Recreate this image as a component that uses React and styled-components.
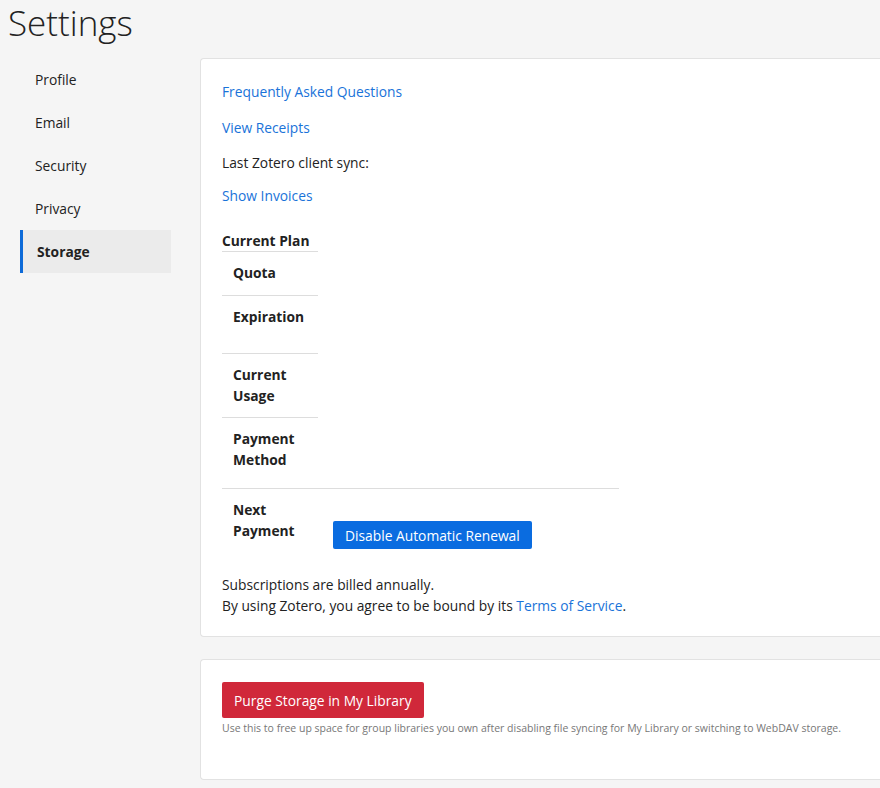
import React from "react";
import styled, { createGlobalStyle } from "styled-components";

const Global = createGlobalStyle`
  html, body { margin: 0; background: #f5f5f5; }
  body { font-family: "Open Sans", "Noto Sans", sans-serif; font-size: 13.8px; color: #222; }
`;

const Page = styled.div`
  padding: 0 0 0 8px;
  width: 872px;
  overflow: hidden;
`;
const Title = styled.h1`
  margin: 0;
  font-weight: 300;
  font-size: 35px;
  line-height: 46px;
  color: #222;
`;
const Body = styled.div`
  display: flex;
  margin-top: 12px;
`;
const Nav = styled.nav`
  width: 151px;
  margin-left: 12px;
  margin-right: 29px;
  display: flex;
  flex-direction: column;
`;
const NavItem = styled.div`
  height: 43px;
  display: flex;
  align-items: center;
  padding-left: ${p => (p.$active ? "14px" : "15px")};
  border-left: ${p => (p.$active ? "3px solid #0d6ad8" : "none")};
  background: ${p => (p.$active ? "#ebebeb" : "transparent")};
  font-weight: ${p => (p.$active ? 700 : 400)};
  color: #222;
`;
const Main = styled.div`
  flex: 1;
  display: flex;
  flex-direction: column;
  gap: 22px;
`;
const Card = styled.section`
  background: #fff;
  border: 1px solid #e2e2e2;
  border-right: none;
  border-radius: 4px 0 0 4px;
  padding: ${p => p.$pad};
`;
const Link = styled.a`
  color: #1a73d9;
  text-decoration: none;
`;
const Line = styled.div`
  line-height: 20px;
  margin-bottom: ${p => p.$mb || 0}px;
`;
const Table = styled.div`
  display: grid;
  grid-template-columns: 96px 301px;
  margin-top: 24px;
  line-height: 21px;
`;
const Head = styled.div`
  grid-column: 1;
  font-weight: 700;
  padding-bottom: 0;
  border-bottom: 1px solid #ddd;
`;
const Label = styled.div`
  grid-column: 1;
  font-weight: 700;
  padding: 10px 11px 0;
  height: ${p => p.$h}px;
  box-sizing: border-box;
  border-top: ${p => (p.$top ? "1px solid #ddd" : "none")};
`;
const Value = styled.div`
  grid-column: 2;
  padding: 32px 0 0 15px;
  border-top: 1px solid #ddd;
`;
const Blue = styled.button`
  background: #0a6ce0;
  color: #fff;
  border: none;
  border-radius: 2px;
  font: inherit;
  padding: 0 12px;
  height: 28px;
`;
const Notes = styled.div`
  margin-top: 22px;
  line-height: 21px;
`;
const Red = styled.button`
  background: #d0283a;
  color: #fff;
  border: none;
  border-radius: 2px;
  font: inherit;
  padding: 0 12px;
  height: 36px;
`;
const Help = styled.div`
  font-size: 10.5px;
  color: #777;
  margin-top: 3px;
`;

export default function App() {
  return (
    <Page>
      <Global />
      <Title>Settings</Title>
      <Body>
        <Nav>
          {["Profile", "Email", "Security", "Privacy", "Storage"].map(n => (
            <NavItem key={n} $active={n === "Storage"}>{n}</NavItem>
          ))}
        </Nav>
        <Main>
          <Card $pad="23px 0 20px 21px">
            <Line $mb={16}><Link>Frequently Asked Questions</Link></Line>
            <Line $mb={15}><Link>View Receipts</Link></Line>
            <Line $mb={13}>Last Zotero client sync:</Line>
            <Line><Link>Show Invoices</Link></Line>
            <Table>
              <Head>Current Plan</Head>
              <Label $h={43}>Quota</Label>
              <Label $h={58} $top>Expiration</Label>
              <Label $h={64} $top>Current Usage</Label>
              <Label $h={71} $top>Payment Method</Label>
              <Label $h={64} $top>Next Payment</Label>
              <Value style={{ gridRow: 6 }}><Blue>Disable Automatic Renewal</Blue></Value>
            </Table>
            <Notes>
              Subscriptions are billed annually.<br />
              By using Zotero, you agree to be bound by its <Link>Terms of Service</Link>.
            </Notes>
          </Card>
          <Card $pad="22px 0 44px 21px">
            <Red>Purge Storage in My Library</Red>
            <Help>Use this to free up space for group libraries you own after disabling file syncing for My Library or switching to WebDAV storage.</Help>
          </Card>
        </Main>
      </Body>
    </Page>
  );
}
